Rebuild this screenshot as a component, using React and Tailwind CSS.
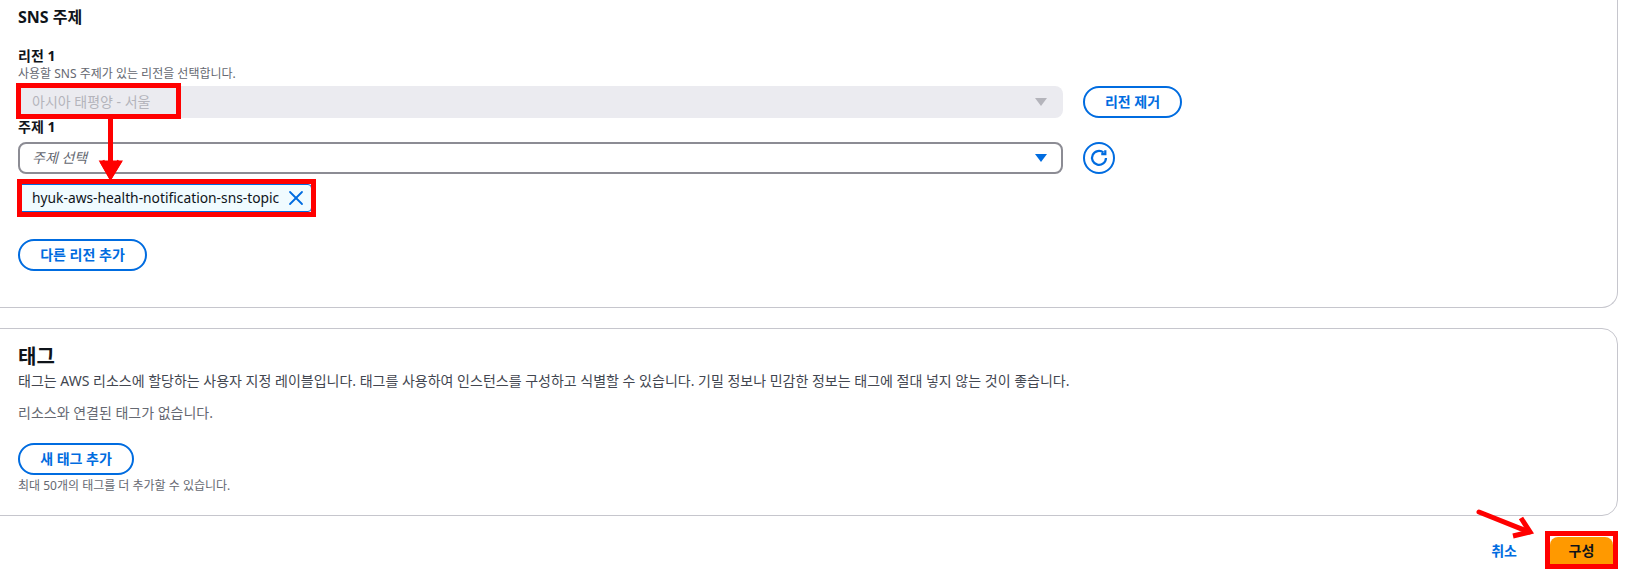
import React from 'react';
import { X } from 'lucide-react';

const font = 'font-["Noto_Sans","Noto_Sans_CJK_KR",sans-serif]';

const OutlineButton = ({ children, className = '' }) => (
    <button className={`h-8 rounded-full border-2 border-[#006ce0] bg-white text-sm font-bold text-[#006ce0] ${className}`}>
        {children}
    </button>
);

const Caret = ({ color }) => (
    <svg width="12" height="8" viewBox="0 0 12 8" className="shrink-0">
        <path d="M0 0h12L6 8z" fill={color} />
    </svg>
);

const RefreshIcon = () => (
    <svg width="18" height="18" viewBox="0 0 16 16" fill="none" stroke="#006ce0" strokeWidth="2">
        <path d="M14.2 8a6.2 6.2 0 1 1-2.2-4.8" />
        <path d="M13.6 1.2v3.4h-3.6" strokeLinejoin="miter" />
    </svg>
);

const App = () => {
    return (
        <div className={`relative h-[582px] w-[1631px] overflow-hidden bg-white ${font}`}>
            <section className="ml-[-16px] mr-[13px] h-[308px] rounded-b-[16px] border border-t-0 border-[#c6c6cd] pl-[33px]">
                <h2 className="pt-[6px] text-base leading-[23px] font-bold text-[#0f141a]">SNS 주제</h2>

                <div className="mt-[17px] text-sm leading-[20px] font-bold text-[#0f141a]">리전 1</div>
                <p className="text-xs leading-[16px] text-[#656871]">사용할 SNS 주제가 있는 리전을 선택합니다.</p>
                <div className="mt-[4px] flex items-center gap-5">
                    <div className="flex h-8 w-[1045px] items-center justify-between rounded-lg bg-[#ebebf0] pr-[16px] pl-[14px] text-sm text-[#b4b4bb]">
                        아시아 태평양 - 서울
                        <Caret color="#b4b4bb" />
                    </div>
                    <OutlineButton className="w-[99px]">리전 제거</OutlineButton>
                </div>

                <div className="mt-[-1px] text-sm leading-[20px] font-bold text-[#0f141a]">주제 1</div>
                <div className="mt-[5px] flex items-center gap-5">
                    <div className="flex h-8 w-[1045px] items-center justify-between rounded-lg border-2 border-[#8c8c94] pr-[14px] pl-[12px] text-sm text-[#656871] italic">
                        주제 선택
                        <Caret color="#006ce0" />
                    </div>
                    <button className="flex h-8 w-8 items-center justify-center rounded-full border-2 border-[#006ce0]">
                        <RefreshIcon />
                    </button>
                </div>

                <div className="mt-[10px] flex h-[28px] w-[294px] items-center justify-between rounded-sm border border-[#006ce0] bg-[#f0fbff] pr-[3px] pl-[13px] text-[13.8px] text-[#0f141a]">
                    hyuk-aws-health-notification-sns-topic
                    <X size={24} strokeWidth={1.8} className="shrink-0 text-[#006ce0]" />
                </div>

                <OutlineButton className="mt-[27px] block w-[129px]">다른 리전 추가</OutlineButton>
            </section>

            <section className="mt-[20px] ml-[-16px] mr-[13px] h-[188px] rounded-[16px] border border-[#c6c6cd] pl-[33px]">
                <h2 className="pt-[15px] text-xl leading-[25px] font-bold text-[#0f141a]">태그</h2>
                <p className="mt-[2px] text-sm leading-[20px] text-[#424650]">
                    태그는 AWS 리소스에 할당하는 사용자 지정 레이블입니다. 태그를 사용하여 인스턴스를 구성하고 식별할 수 있습니다. 기밀 정보나 민감한 정보는 태그에 절대 넣지 않는 것이 좋습니다.
                </p>
                <p className="mt-[12px] text-sm leading-[20px] text-[#656871]">리소스와 연결된 태그가 없습니다.</p>
                <OutlineButton className="mt-[20px] block w-[116px]">새 태그 추가</OutlineButton>
                <p className="mt-[3px] text-xs leading-[16px] text-[#656871]">최대 50개의 태그를 더 추가할 수 있습니다.</p>
            </section>

            <div className="mt-[21px] mr-[18px] flex items-center justify-end gap-[33px]">
                <button className="text-sm font-bold text-[#006ce0]">취소</button>
                <button className="h-[28px] w-[63px] rounded-t-lg bg-[#ff9900] text-sm font-bold text-[#0f141a]">구성</button>
            </div>

            {/* annotations drawn over the screenshot */}
            <div className="absolute top-[83px] left-[16px] h-[36px] w-[165px] border-[5px] border-[#ff0000]" />
            <div className="absolute top-[179px] left-[17px] h-[38px] w-[299px] border-[5px] border-[#ff0000]" />
            <div className="absolute top-[531px] left-[1545px] h-[38px] w-[73px] border-[5px] border-[#ff0000]" />
            <svg className="absolute top-0 left-0" width="1631" height="582" fill="none" stroke="#ff0000" strokeWidth="5">
                <path d="M110.500 118V176" />
                <path d="M103 163l7.500 13 8-13z" fill="#ff0000" />
                <path d="M102 161l8.500 15 9-15" />
                <path d="M1479 512l50 20" strokeLinecap="round" />
                <path d="M1521 518l9 14-17 4" />
            </svg>
        </div>
    );
};

export default App;
